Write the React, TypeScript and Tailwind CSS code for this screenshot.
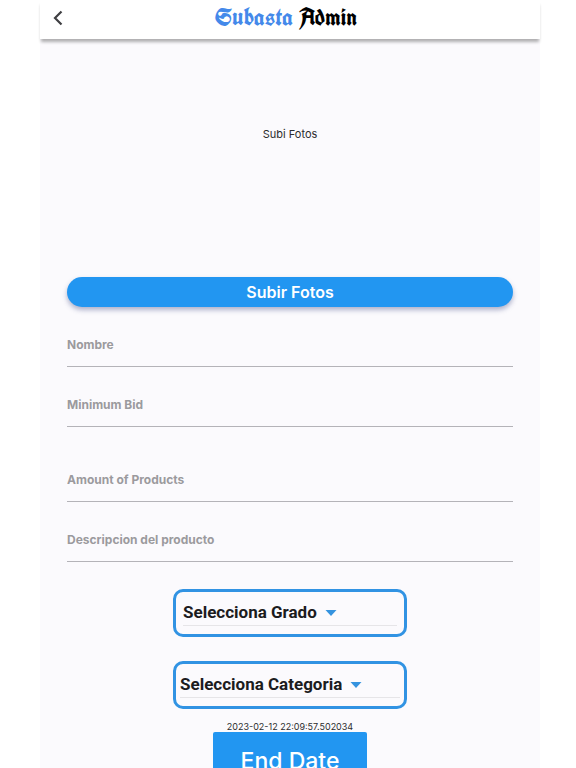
import type { ReactNode } from 'react';

type FieldProps = {
  label: string;
  className?: string;
};

function Field({ label, className = 'mt-5' }: FieldProps) {
  return (
    <input
      type="text"
      aria-label={label}
      placeholder={label}
      className={`block h-10 w-full border-b border-[#b4b3b8] bg-transparent pb-1 text-xs font-bold text-gray-900 outline-none placeholder:text-[#9b9a9e] placeholder:opacity-100 ${className}`}
    />
  );
}

type DropdownProps = {
  label: string;
  options: string[];
  className?: string;
};

function Dropdown({ label, options, className = '' }: DropdownProps) {
  return (
    <div className={`h-12 w-[234px] shrink-0 rounded-[10px] border-[3px] border-[#3193e3] pt-1.5 ${className}`}>
      <div className="flex h-7 items-center gap-2 border-b border-[#e6e5e8] pt-0.5">
        <select
          aria-label={label}
          defaultValue=""
          className="field-sizing-content appearance-none bg-transparent font-['Roboto',sans-serif] text-[17px] font-bold text-[#1c1c1e] outline-none"
        >
          <option value="">{label}</option>
          {options.map((option) => (
            <option key={option}>{option}</option>
          ))}
        </select>
        <svg width="12" height="6" viewBox="0 0 12 6" className="fill-[#3593df]" aria-hidden="true">
          <path d="M0.5 0h11L6 6z" />
        </svg>
      </div>
    </div>
  );
}

function Header({ children }: { children: ReactNode }) {
  return (
    <header className="relative z-10 flex h-[39px] shrink-0 items-center bg-white pb-1 shadow-[0_4px_3px_-1px_rgba(0,0,0,0.3)]">
      <button type="button" aria-label="Back" className="flex w-9 justify-center">
        <svg width="10" height="16" viewBox="0 0 10 16" fill="none" stroke="#3f3f42" strokeWidth="2.2">
          <path d="M8.5 1.5L2 8l6.5 6.5" />
        </svg>
      </button>
      {children}
    </header>
  );
}

export default function App() {
  return (
    <div className="h-screen overflow-hidden bg-white pr-9 pl-10 font-['Inter',sans-serif]">
      <div className="flex h-full flex-col bg-[#fbfafd]">
        <Header>
          <h1 className="flex-1 pr-11 pb-0.5 text-center font-['Old_English_Text_MT','UnifrakturCook','Liberation_Serif',serif] text-2xl leading-6 font-bold text-black">
            <span className="text-[#4489ea]">Subasta</span> Admin
          </h1>
        </Header>

        <main className="flex flex-col items-center px-[27px]">
          <div className="flex h-[238px] items-center justify-center pb-12">
            <p className="text-[11px] text-[#2c2c2e]">Subi Fotos</p>
          </div>

          <button
            type="button"
            className="h-[30px] w-full shrink-0 rounded-full bg-[#2296f1] text-base font-semibold text-white shadow-[0_3px_5px_rgba(60,70,130,0.4)]"
          >
            Subir Fotos
          </button>

          <Field label="Nombre" />
          <Field label="Minimum Bid" />
          <Field label="Amount of Products" className="mt-[35px]" />
          <Field label="Descripcion del producto" />

          <Dropdown label="Selecciona Grado" options={['A', 'B', 'C']} className="mt-[27px] px-[7px]" />
          <Dropdown label="Selecciona Categoria" options={['Arte', 'Autos', 'Joyas']} className="mt-6 px-1" />

          <p className="mt-[13px] text-[9px] leading-[10px] text-[#2c2c2e]">2023-02-12 22:09:57.502034</p>
          <button type="button" className="h-[58px] w-[154px] shrink-0 rounded-t-xs bg-[#2296f1] text-[23px] font-medium text-white">
            End Date
          </button>
        </main>
      </div>
    </div>
  );
}
